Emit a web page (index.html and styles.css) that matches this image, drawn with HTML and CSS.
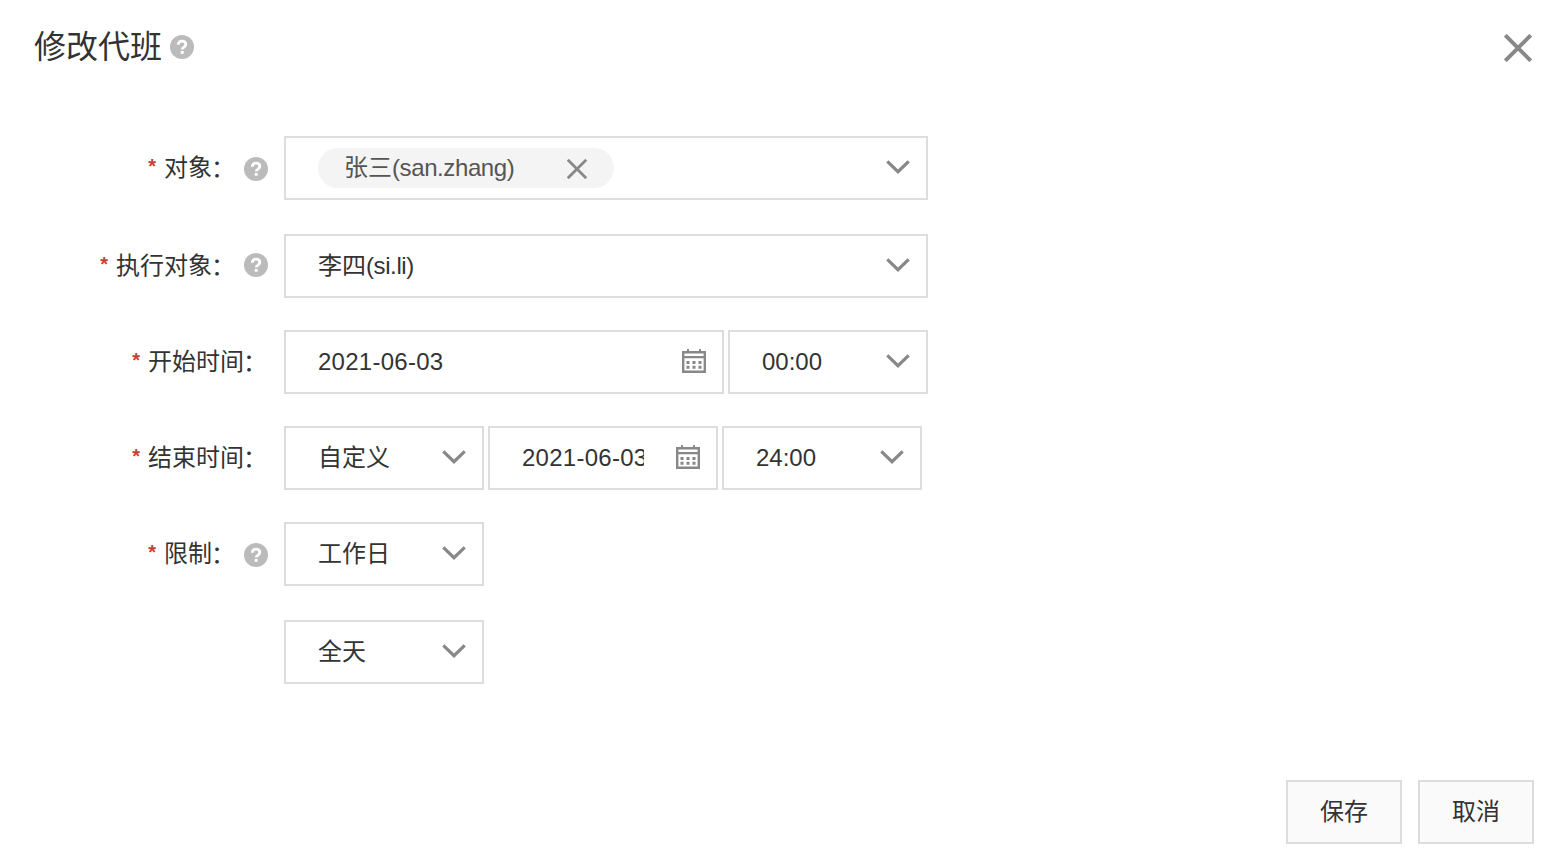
FILE: index.html
```html
<!DOCTYPE html>
<html lang="zh-CN">
<head>
<meta charset="utf-8">
<title>修改代班</title>
<link rel="stylesheet" href="styles.css">
</head>
<body>
<svg class="sprite" aria-hidden="true">
  <symbol id="help" viewBox="0 0 24 24"><circle cx="12" cy="12" r="12" fill="#bbb"/><path d="M8.300 9.800C8.300 7.400 9.800 6.200 12 6.200s3.800 1.300 3.800 3.200c0 2.600-3.600 2.700-3.600 5.200" fill="none" stroke="#fff" stroke-width="2.800"/><rect x="10.700" y="16" width="3" height="2.800" fill="#fff"/></symbol>
  <symbol id="arrow" viewBox="0 0 24 14"><path d="M1.300 1.300 12 11.700 22.700 1.300" fill="none" stroke="#888" stroke-width="3.200"/></symbol>
  <symbol id="cross" viewBox="0 0 28 28"><path d="M1.300 1.300 26.700 26.700M26.700 1.300 1.300 26.700" fill="none" stroke="#888" stroke-width="4"/></symbol>
  <symbol id="cross-small" viewBox="0 0 20 20"><path d="M.8.8 19.200 19.200M19.200.8.8 19.200" fill="none" stroke="#888" stroke-width="2.800"/></symbol>
  <symbol id="calendar" viewBox="0 0 24 24"><path fill="#888" fill-rule="evenodd" d="M0 2H5V0H7V2H17V0H19V2H24V24H0ZM2.400 4.400V7H21.600V4.400ZM2.400 9.300V21.600H21.600V9.300Z"/><path fill="#888" d="M4.500 12h3v3h-3zM10.500 12h3v3h-3zM16.500 12h3v3h-3zM4.500 16.800h3v3h-3zM10.500 16.800h3v3h-3zM16.500 16.800h3v3h-3z"/></symbol>
</svg>
<main class="dialog">
  <header class="header">
    <h1 class="title">修改代班</h1>
    <svg class="help"><use href="#help"/></svg>
    <svg class="close"><use href="#cross"/></svg>
  </header>
  <form class="form">
    <div class="row row-loose">
      <div class="label"><span class="star">*</span><span class="caption">对象<span class="colon">：</span></span><svg class="help help-low"><use href="#help"/></svg></div>
      <div class="field field-wide">
        <div class="tag"><span>张三<span class="name">(san.zhang)</span></span><svg class="remove"><use href="#cross-small"/></svg></div>
        <svg class="arrow"><use href="#arrow"/></svg>
      </div>
    </div>
    <div class="row">
      <div class="label"><span class="star">*</span><span class="caption">执行对象<span class="colon">：</span></span><svg class="help"><use href="#help"/></svg></div>
      <div class="field field-wide"><span class="value">李四<span class="name">(si.li)</span></span><svg class="arrow"><use href="#arrow"/></svg></div>
    </div>
    <div class="row">
      <div class="label"><span class="star">*</span><span class="caption">开始时间<span class="colon">：</span></span></div>
      <div class="field field-date"><span class="value date">2021-06-03</span><svg class="calendar"><use href="#calendar"/></svg></div>
      <div class="field"><span class="value">00:00</span><svg class="arrow"><use href="#arrow"/></svg></div>
    </div>
    <div class="row">
      <div class="label"><span class="star">*</span><span class="caption">结束时间<span class="colon">：</span></span></div>
      <div class="field"><span class="value">自定义</span><svg class="arrow"><use href="#arrow"/></svg></div>
      <div class="field field-short"><span class="value date">2021-06-03</span><svg class="calendar"><use href="#calendar"/></svg></div>
      <div class="field"><span class="value">24:00</span><svg class="arrow"><use href="#arrow"/></svg></div>
    </div>
    <div class="row row-loose">
      <div class="label"><span class="star">*</span><span class="caption">限制<span class="colon">：</span></span><svg class="help help-low"><use href="#help"/></svg></div>
      <div class="field"><span class="value">工作日</span><svg class="arrow"><use href="#arrow"/></svg></div>
    </div>
    <div class="row">
      <div class="label"></div>
      <div class="field"><span class="value">全天</span><svg class="arrow"><use href="#arrow"/></svg></div>
    </div>
  </form>
  <footer class="footer">
    <button class="button" type="button">保存</button>
    <button class="button" type="button">取消</button>
  </footer>
</main>
</body>
</html>
```
FILE: styles.css
```css
* { box-sizing: border-box; }
body {
  margin: 0;
  background: #fff;
  color: #333;
  font: 24px/36px "Liberation Sans", "Noto Sans CJK SC", sans-serif;
}
svg { display: block; flex: none; }
.sprite { position: absolute; width: 0; height: 0; }
.dialog {
  display: flex;
  flex-direction: column;
  width: 1568px;
  height: 862px;
  padding: 22px 34px 18px;
}
.header { display: flex; align-items: center; height: 50px; }
.title { margin: 0 8px 1px 0; font-size: 32px; line-height: 48px; font-weight: 400; }
.help { width: 24px; height: 24px; margin-left: 8px; }
.header .help { margin-left: 0; }
.help-low { margin-top: 3px; }
.close { width: 28px; height: 28px; margin: 2px 2px 0 auto; }
.form { margin-top: 64px; }
.row { display: flex; gap: 4px; margin-bottom: 32px; }
.row-loose { margin-bottom: 34px; }
.label {
  display: flex;
  align-items: center;
  justify-content: flex-end;
  width: 234px;
  height: 62px;
  margin-right: 12px;
  white-space: nowrap;
}
.caption { height: 36px; margin-top: 2px; }
.colon { margin: 0 1px 0 -1px; line-height: 1; vertical-align: -1px; }
.star { margin: 0 8px 2px 0; color: #c7402f; font-size: 20px; font-weight: 700; }
.field {
  display: flex;
  align-items: center;
  justify-content: space-between;
  width: 200px;
  height: 64px;
  padding: 0 16px 2px 32px;
  border: 2px solid #ddd;
}
.field-wide { width: 644px; }
.field-date { width: 440px; }
.field-short { width: 230px; }
.value { margin-top: 2px; white-space: nowrap; }
.date { letter-spacing: .27px; }
.field-short .date { width: 122px; overflow: hidden; }
.name { letter-spacing: -.4px; }
.tag {
  display: flex;
  align-items: center;
  justify-content: space-between;
  width: 296px;
  height: 40px;
  margin-top: 2px;
  padding: 0 27px 0 26px;
  border-radius: 20px;
  background: #f4f4f4;
  color: #555;
}
.remove { width: 20px; height: 20px; margin-top: 2px; }
.arrow { width: 24px; height: 14px; }
.calendar { width: 24px; height: 24px; }
.footer { display: flex; justify-content: flex-end; gap: 16px; margin-top: auto; }
.button {
  width: 116px;
  height: 64px;
  padding: 0;
  border: 2px solid #ddd;
  background: #fafafa;
  color: #333;
  font: inherit;
}
```
